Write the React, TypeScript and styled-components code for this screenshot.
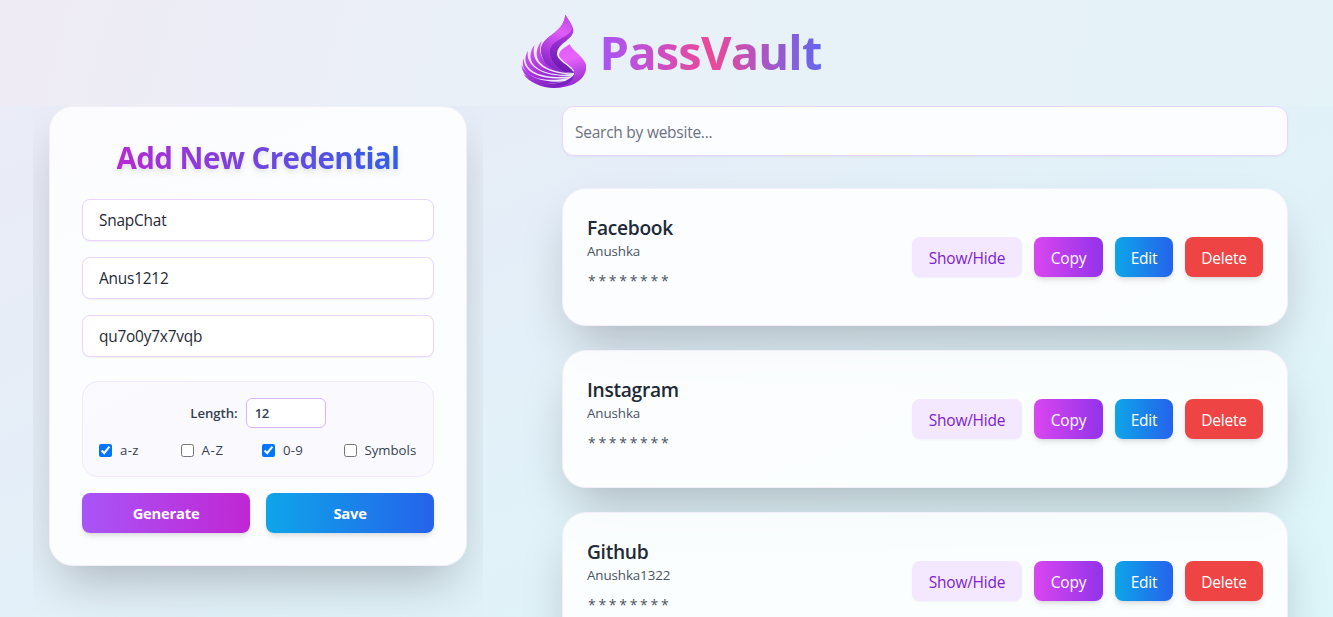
import React, { useState } from "react";
import styled, { createGlobalStyle, css } from "styled-components";

const GlobalStyle = createGlobalStyle`
  *, *::before, *::after { box-sizing: border-box; }
  body {
    margin: 0;
    font-family: "Open Sans", "Noto Sans", sans-serif;
    color: #1f2937;
    overflow: hidden;
  }
  button, input { font: inherit; letter-spacing: inherit; }
`;

const Page = styled.div`
  height: 100vh;
  display: flex;
  flex-direction: column;
  overflow: hidden;
  background: linear-gradient(to bottom right, #ecebf7, #e5eef8 38%, #e1f2f9 62%, #ddf6f9);
`;

const Header = styled.header`
  height: 106px;
  flex: none;
  display: flex;
  align-items: center;
  justify-content: center;
  gap: 14px;
  padding: 0 0 2px 8px;
  background: linear-gradient(105deg, #efebf5, #e9f0f8 38%, #e4f3f8);
`;

const Brand = styled.h1`
  margin: 0;
  font-size: 47px;
  line-height: 64px;
  font-weight: 700;
  letter-spacing: -0.8px;
  color: transparent;
  background: linear-gradient(to right, #a855f7, #ec4899, #6366f1);
  background-clip: text;
  -webkit-background-clip: text;
`;

const Main = styled.main`
  flex: 1;
  min-height: 0;
  display: flex;
  padding-left: 33px;
`;

const FormColumn = styled.section`
  width: 450px;
  padding: 0 16px;
  overflow: hidden;
`;

const ListColumn = styled.section`
  flex: 1;
  padding: 0 45px 0 79px;
  overflow: hidden;
`;

const panel = css`
  background: rgba(255, 255, 255, 0.85);
  border: 1px solid #f3eefc;
  border-radius: 24px;
  box-shadow: 0 25px 50px -12px rgba(0, 0, 0, 0.25);
`;

const FormCard = styled.form`
  ${panel}
  height: 460px;
  padding: 32px;
  display: flex;
  flex-direction: column;
`;

const FormTitle = styled.h2`
  align-self: center;
  margin: 0;
  padding-top: 1px;
  height: 60px;
  font-size: 29.5px;
  line-height: 36px;
  font-weight: 700;
  letter-spacing: -0.58px;
  white-space: nowrap;
  color: transparent;
  background: linear-gradient(to right, #c026d3 -8%, #2563eb 108%);
  background-clip: text;
  -webkit-background-clip: text;
  filter: drop-shadow(0 4px 3px rgba(0, 0, 0, 0.07)) drop-shadow(0 2px 2px rgba(0, 0, 0, 0.06));
`;

const TextField = styled.input`
  height: 42px;
  flex: none;
  margin-bottom: 16px;
  padding: 1px 16px 0;
  border: 1px solid #e9d5ff;
  border-radius: 8px;
  background: #fff;
  color: #1f2937;
  font-size: 15.4px;
  letter-spacing: -0.2px;
  outline: none;
  box-shadow: 0 1px 2px rgba(0, 0, 0, 0.05);
`;

const Options = styled.div`
  height: 96px;
  margin: 8px 0 16px;
  padding: 16px;
  border: 1px solid #f3e8ff;
  border-radius: 16px;
  background: rgba(250, 245, 255, 0.4);
  color: #374151;
  font-size: 13.2px;
`;

const LengthRow = styled.label`
  display: flex;
  align-items: center;
  justify-content: center;
  gap: 8px;
  font-weight: 600;
  letter-spacing: -0.05px;
`;

const LengthField = styled.input`
  width: 80px;
  height: 30px;
  padding: 0 8px;
  border: 1px solid #d8b4fe;
  border-radius: 6px;
  background: #fff;
  color: #374151;
  letter-spacing: -0.4px;
  outline: none;
`;

const CheckRow = styled.div`
  display: grid;
  grid-template-columns: repeat(4, minmax(0, 1fr));
  gap: 8px;
  margin-top: 12px;
`;

const CheckLabel = styled.label<{ $tracking: number }>`
  display: flex;
  align-items: center;
  gap: 8px;
  height: 20px;
  white-space: nowrap;
  letter-spacing: ${(p) => p.$tracking}px;

  input { width: 13px; height: 13px; margin: 0; }
`;

const FormActions = styled.div`
  display: grid;
  grid-template-columns: 1fr 1fr;
  gap: 16px;
`;

const fills = {
  reveal: css`background: #f3e8ff; color: #7e22ce; box-shadow: 0 1px 2px rgba(0, 0, 0, 0.05);`,
  copy: css`background: linear-gradient(to right, #d946ef, #9333ea);`,
  edit: css`background: linear-gradient(to right, #0ea5e9, #2563eb);`,
  remove: css`background: #ef4444;`,
  generate: css`background: linear-gradient(to right, #a855f7, #c026d3);`,
};

const Button = styled.button<{ $fill: keyof typeof fills; $width?: number; $strong?: boolean }>`
  height: 40px;
  width: ${(p) => (p.$width ? `${p.$width}px` : "auto")};
  padding: ${(p) => (p.$strong ? "0" : "1px 0 0")};
  border: 0;
  border-radius: 8px;
  color: #fff;
  font-size: ${(p) => (p.$strong ? 14.8 : 15.5)}px;
  font-weight: ${(p) => (p.$strong ? 700 : 400)};
  letter-spacing: -0.25px;
  white-space: nowrap;
  box-shadow: 0 4px 6px -1px rgba(0, 0, 0, 0.1), 0 2px 4px -2px rgba(0, 0, 0, 0.1);
  ${(p) => fills[p.$fill]}
`;

const Search = styled.input`
  display: block;
  width: 100%;
  height: 50px;
  margin-bottom: 32px;
  padding: 1px 12px 0;
  border: 1px solid #e9d5ff;
  border-radius: 12px;
  background: rgba(255, 255, 255, 0.85);
  font-size: 15.5px;
  letter-spacing: -0.25px;
  outline: none;
  box-shadow: 0 1px 2px rgba(0, 0, 0, 0.05);

  &::placeholder { color: #6b7280; opacity: 1; }
`;

const Entry = styled.article`
  ${panel}
  height: 138px;
  margin-bottom: 24px;
  padding: 24px;
  display: flex;
  align-items: center;
  justify-content: space-between;
`;

const Details = styled.div`
  align-self: flex-start;
`;

const Site = styled.h3`
  margin: 0;
  padding-top: 1px;
  height: 28px;
  font-size: 19.2px;
  line-height: 28px;
  font-weight: 600;
  letter-spacing: -0.3px;
`;

const Username = styled.p`
  margin: 0;
  font-size: 13.4px;
  line-height: 20px;
  letter-spacing: -0.12px;
  color: #4b5563;
`;

const Secret = styled.p`
  margin: 10px 0 0 1px;
  font-size: 14px;
  line-height: 20px;
  letter-spacing: 2.7px;
  color: #4b5563;
`;

const Actions = styled.div`
  display: flex;
  gap: 12px;
`;

const Logo = () => (
  <svg width="66" height="74" viewBox="27 16 198 222" aria-hidden="true">
    <defs>
      <linearGradient id="flame" x1="0.8" y1="0" x2="0.55" y2="1">
        <stop offset="0" stopColor="#c94ee9" />
        <stop offset="0.45" stopColor="#9a31d3" />
        <stop offset="1" stopColor="#6a17ad" />
      </linearGradient>
      <linearGradient id="flameLight" x1="0.7" y1="0" x2="0.4" y2="1">
        <stop offset="0" stopColor="#c04be4" />
        <stop offset="0.3" stopColor="#e05df8" />
        <stop offset="0.65" stopColor="#b43fe3" />
        <stop offset="1" stopColor="#7d22c2" />
      </linearGradient>
      <linearGradient id="petal" x1="0.3" y1="0" x2="0.5" y2="1">
        <stop offset="0" stopColor="#dd5af6" />
        <stop offset="0.35" stopColor="#e963fc" />
        <stop offset="1" stopColor="#8f29cc" />
      </linearGradient>
      <linearGradient id="feather" gradientUnits="userSpaceOnUse" x1="60" y1="95" x2="130" y2="230">
        <stop offset="0" stopColor="#d95ff5" />
        <stop offset="0.55" stopColor="#ac36de" />
        <stop offset="1" stopColor="#7a22c0" />
      </linearGradient>
    </defs>
    <path d="M93 93C60 110 32 140 32 165C30 200 70 234 140 234C180 230 190 210 190 188L100 150Z" fill="#eeeafa" />
    <g fill="url(#feather)">
      <path d="M93 93C62 130 68 184 187 192C112 180 72 143 93 93Z" />
      <path d="M71 105C40 146 62 200 185 195C100 191 56 158 71 105Z" />
      <path d="M51 123C26 164 60 214 182 199C94 203 42 170 51 123Z" />
      <path d="M38 145C24 184 64 225 176 205C94 214 36 189 38 145Z" />
      <path d="M32 165C30 198 76 238 168 214C104 223 45 202 32 165Z" />
      <path d="M37 193C58 224 110 242 155 232C182 224 190 210 190 193C166 228 92 233 37 193Z" />
    </g>
    <path d="M175 102C184 124 220 140 226 168C228 204 192 234 135 234C166 230 190 216 189 190C184 166 146 158 144 136C145 119 165 114 175 102Z" fill="url(#petal)" />
    <path d="M163 14C171 32 188 46 187 65C184 91 141 101 139 129C138 155 174 163 188 185L188 190C138 187 93 168 90 123C90 76 158 75 163 14Z" fill="url(#flame)" />
    <path d="M163 14C171 31 186 44 182 60C169 86 117 91 117 126C117 155 139 171 158 186C122 181 93 159 90 123C90 76 158 75 163 14Z" fill="url(#flameLight)" />
    <path d="M175 102C154 110 140 119 140 134C142 154 179 166 188 185" fill="none" stroke="#f2ecfb" strokeWidth="4" />
  </svg>
);

const entries = [
  { site: "Facebook", user: "Anushka" },
  { site: "Instagram", user: "Anushka" },
  { site: "Github", user: "Anushka1322" },
];

const charsets = [
  { label: "a-z", on: true, tracking: 0.4 },
  { label: "A-Z", on: false, tracking: 0.7 },
  { label: "0-9", on: true, tracking: 0.2 },
  { label: "Symbols", on: false, tracking: 0 },
];

export default function App() {
  const [query, setQuery] = useState("");
  const shown = entries.filter((e) => e.site.toLowerCase().includes(query.toLowerCase()));
  return (
    <Page>
      <GlobalStyle />
      <Header>
        <Logo />
        <Brand>PassVault</Brand>
      </Header>
      <Main>
        <FormColumn>
          <FormCard onSubmit={(e) => e.preventDefault()}>
            <FormTitle>Add New Credential</FormTitle>
            <TextField defaultValue="SnapChat" />
            <TextField defaultValue="Anus1212" />
            <TextField defaultValue="qu7o0y7x7vqb" />
            <Options>
              <LengthRow>
                Length:
                <LengthField defaultValue="12" />
              </LengthRow>
              <CheckRow>
                {charsets.map((c) => (
                  <CheckLabel key={c.label} $tracking={c.tracking}>
                    <input type="checkbox" defaultChecked={c.on} />
                    {c.label}
                  </CheckLabel>
                ))}
              </CheckRow>
            </Options>
            <FormActions>
              <Button type="button" $fill="generate" $strong>Generate</Button>
              <Button type="submit" $fill="edit" $strong>Save</Button>
            </FormActions>
          </FormCard>
        </FormColumn>
        <ListColumn>
          <Search placeholder="Search by website..." value={query} onChange={(e) => setQuery(e.target.value)} />
          {shown.map((e) => (
            <Entry key={e.site}>
              <Details>
                <Site>{e.site}</Site>
                <Username>{e.user}</Username>
                <Secret>********</Secret>
              </Details>
              <Actions>
                <Button $fill="reveal" $width={110}>Show/Hide</Button>
                <Button $fill="copy" $width={69}>Copy</Button>
                <Button $fill="edit" $width={58}>Edit</Button>
                <Button $fill="remove" $width={78}>Delete</Button>
              </Actions>
            </Entry>
          ))}
        </ListColumn>
      </Main>
    </Page>
  );
}
